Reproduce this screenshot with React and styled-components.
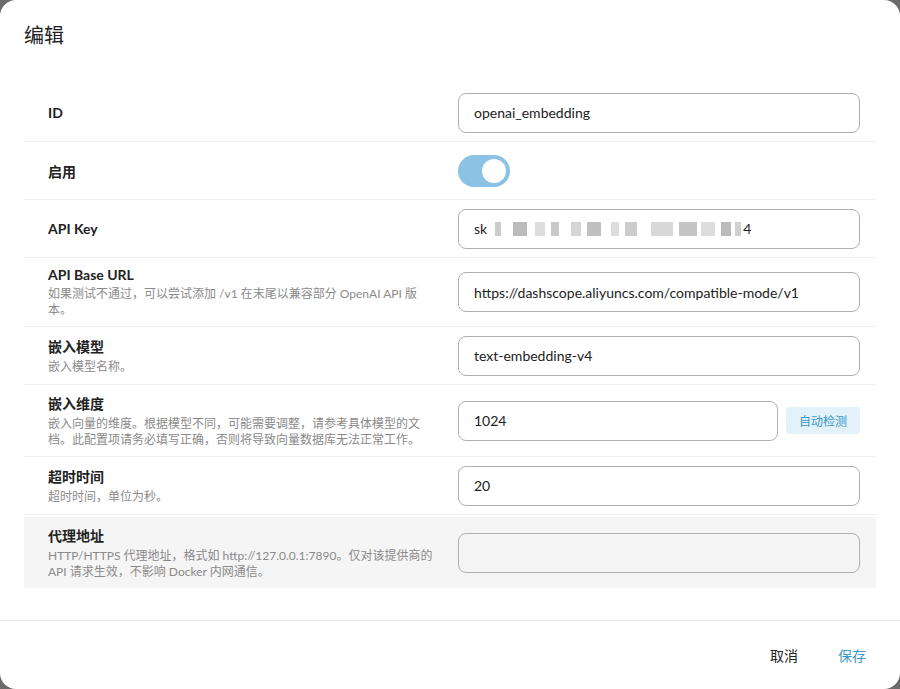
import React from "react";
import styled, { createGlobalStyle } from "styled-components";

const Global = createGlobalStyle`
  html, body { margin: 0; padding: 0; background: #6b6b6b; }
  body { font-family: "Lato", "Noto Sans", "Noto Sans CJK SC", sans-serif; color: #222; }
`;

const Dialog = styled.div`
  width: 900px; height: 689px; background: #fff; border-radius: 16px;
  display: flex; flex-direction: column; box-sizing: border-box; overflow: hidden;
`;
const Title = styled.div`
  font-size: 20px; padding: 20px 24px 0; height: 64px; box-sizing: border-box; color: #222;
`;
const Body = styled.div`
  padding: 20px 24px 0; flex: 1;
`;
const Row = styled.div`
  display: grid; grid-template-columns: 410px 1fr; align-items: center;
  padding: 8px 16px 8px 24px; min-height: 58px; box-sizing: border-box;
  border-bottom: 1px solid #f0f0f0;
  background: ${p => (p.$shade ? "#f5f5f5" : "transparent")};
  ${p => p.$shade && "border-bottom: none; margin-top: 2px; min-height: 71px;"}
`;
const LabelCol = styled.div`
  display: flex; flex-direction: column; gap: 3px; padding-right: 24px;
`;
const Label = styled.div`font-size: 14px; font-weight: 700; color: #222;`;
const Desc = styled.div`font-size: 12px; color: #8a8a8a; line-height: 16px;`;
const Field = styled.div`display: flex; gap: 8px; align-items: center;`;
const Input = styled.div`
  flex: 1; height: 40px; box-sizing: border-box; border: 1px solid #b0b0b0; border-radius: 8px;
  padding: 0 15px; display: flex; align-items: center; font-size: 14px; color: #222;
  background: ${p => (p.$disabled ? "#f5f5f5" : "#fff")};
`;
const Detect = styled.button`
  border: none; background: #e3f1f9; color: #3a98cc; border-radius: 4px;
  height: 27px; padding: 0 13px; font-size: 12px; font-family: inherit;
`;
const Switch = styled.div`
  width: 52px; height: 32px; border-radius: 16px; background: #8cc2e3; position: relative;
  &::after { content: ""; position: absolute; right: 4px; top: 4px; width: 24px; height: 24px;
    border-radius: 50%; background: #fff; }
`;
const Blur = styled.span`
  display: inline-block; width: ${p => p.$w}px; height: 14px; background: ${p => p.$c}; margin-right: ${p => p.$m}px;
`;
const Footer = styled.div`
  border-top: 1px solid #e8e8e8; height: 68px; display: flex; justify-content: flex-end;
  align-items: center; gap: 20px; padding: 0 24px 0 0; margin-top: 0;
`;
const FBtn = styled.button`
  border: none; background: none; font-family: inherit; font-size: 14px; padding: 6px 10px;
  color: ${p => (p.$primary ? "#3a98cc" : "#222")};
`;

const blurs = [[6,"#ccc",12],[14,"#bbb",8],[10,"#ddd",6],[8,"#c8c8c8",12],[10,"#d5d5d5",6],[14,"#c0c0c0",10],[8,"#ddd",6],[12,"#ccc",14],[22,"#d8d8d8",6],[18,"#c5c5c5",4],[14,"#ddd",6],[10,"#bbb",4],[6,"#d0d0d0",2]];

export default function App() {
  return (
    <Dialog>
      <Global />
      <Title>编辑</Title>
      <Body>
        <Row><LabelCol><Label>ID</Label></LabelCol><Field><Input>openai_embedding</Input></Field></Row>
        <Row><LabelCol><Label>启用</Label></LabelCol><Field><Switch /></Field></Row>
        <Row><LabelCol><Label>API Key</Label></LabelCol><Field><Input>sk<span style={{marginLeft:8}}/>{blurs.map((b,i)=><Blur key={i} $w={b[0]} $c={b[1]} $m={b[2]} />)}4</Input></Field></Row>
        <Row><LabelCol><Label>API Base URL</Label><Desc>如果测试不通过，可以尝试添加 /v1 在末尾以兼容部分 OpenAI API 版本。</Desc></LabelCol><Field><Input>https://dashscope.aliyuncs.com/compatible-mode/v1</Input></Field></Row>
        <Row><LabelCol><Label>嵌入模型</Label><Desc>嵌入模型名称。</Desc></LabelCol><Field><Input>text-embedding-v4</Input></Field></Row>
        <Row><LabelCol><Label>嵌入维度</Label><Desc>嵌入向量的维度。根据模型不同，可能需要调整，请参考具体模型的文档。此配置项请务必填写正确，否则将导致向量数据库无法正常工作。</Desc></LabelCol><Field><Input>1024</Input><Detect>自动检测</Detect></Field></Row>
        <Row><LabelCol><Label>超时时间</Label><Desc>超时时间，单位为秒。</Desc></LabelCol><Field><Input>20</Input></Field></Row>
        <Row $shade><LabelCol><Label>代理地址</Label><Desc>HTTP/HTTPS 代理地址，格式如 http://127.0.0.1:7890。仅对该提供商的 API 请求生效，不影响 Docker 内网通信。</Desc></LabelCol><Field><Input $disabled /></Field></Row>
      </Body>
      <Footer><FBtn>取消</FBtn><FBtn $primary>保存</FBtn></Footer>
    </Dialog>
  );
}
